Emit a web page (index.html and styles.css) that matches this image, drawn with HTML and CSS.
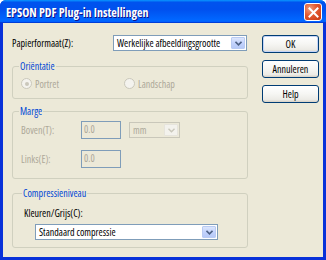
FILE: index.html
```html
<!DOCTYPE html>
<html>
<head>
<meta charset="utf-8">
<link rel="stylesheet" href="styles.css">
</head>
<body>
<div class="window">
  <div class="titlebar">
    <span class="title">EPSON PDF Plug-in Instellingen</span>
    <span class="close"><svg width="11" height="11" viewBox="0 0 11 11"><path d="M1.5 1.5 L9.5 9.5 M9.5 1.5 L1.5 9.5" stroke="#fff" stroke-width="2" stroke-linecap="square"/></svg></span>
  </div>
  <div class="body">
    <div class="main">
      <div class="row paper">
        <span class="lbl">Papierformaat(Z):</span>
        <div class="combo wide">
          <span class="val">Werkelijke afbeeldingsgrootte</span>
          <span class="drop"><svg width="7" height="5" viewBox="0 0 7 5"><path d="M0.5 0.8 L3.5 3.8 L6.5 0.8" fill="none" stroke="#4d6185" stroke-width="1.6"/></svg></span>
        </div>
      </div>
      <fieldset class="group orient">
        <legend>Oriëntatie</legend>
        <div class="radios">
          <span class="radio first"><span class="dot on"></span><span class="dis">Portret</span></span>
          <span class="radio"><span class="dot"></span><span class="dis">Landschap</span></span>
        </div>
      </fieldset>
      <fieldset class="group marge">
        <legend>Marge</legend>
        <div class="mrow">
          <span class="mlbl dis">Boven(T):</span>
          <span class="edit">0.0</span>
          <div class="combo unit">
            <span class="val dis">mm</span>
            <span class="drop grey"><svg width="7" height="5" viewBox="0 0 7 5"><path d="M0.5 0.8 L3.5 3.8 L6.5 0.8" fill="none" stroke="#c9c7ba" stroke-width="1.4"/></svg></span>
          </div>
        </div>
        <div class="mrow second">
          <span class="mlbl dis">Links(E):</span>
          <span class="edit">0.0</span>
        </div>
      </fieldset>
      <fieldset class="group comp">
        <legend>Compressieniveau</legend>
        <div class="clbl">Kleuren/Grijs(C):</div>
        <div class="combo std">
          <span class="val">Standaard compressie</span>
          <span class="drop"><svg width="7" height="5" viewBox="0 0 7 5"><path d="M0.5 0.8 L3.5 3.8 L6.5 0.8" fill="none" stroke="#4d6185" stroke-width="1.6"/></svg></span>
        </div>
      </fieldset>
    </div>
    <div class="buttons">
      <button class="btn def">OK</button>
      <button class="btn">Annuleren</button>
      <button class="btn">Help</button>
    </div>
  </div>
</div>
</body>
</html>
```
FILE: styles.css
```css
* { box-sizing: border-box; }
html, body { margin: 0; padding: 0; }
body {
  width: 326px; height: 260px; overflow: hidden;
  font-family: "Open Sans", "Liberation Sans", Arial, sans-serif;
  font-stretch: 75%;
  font-size: 10px; color: #000;
}
.window {
  width: 326px; height: 260px;
  display: flex; flex-direction: column;
  background: #0831d9;
  border-radius: 6px 6px 0 0;
}
.titlebar {
  height: 23px; flex: none;
  display: flex; align-items: center; justify-content: space-between;
  padding: 0 4px 0 6px;
  background: linear-gradient(180deg, #0997ff 0%, #0053ee 10%, #0050ee 40%, #0066ff 85%, #0066ff 92%, #005bff 95%, #003dd7 97%, #003dd7 100%);
  border-radius: 6px 6px 0 0;
}
.title {
  color: #fff; font-weight: bold; font-size: 12px;
  text-shadow: 1px 1px #0f1089;
  padding-top: 1px;
}
.close {
  width: 18px; height: 18px; margin-top: 1px;
  display: flex; align-items: center; justify-content: center;
  border: 1px solid #fff; border-radius: 3px;
  background: radial-gradient(circle at 30% 30%, #f0a080 0%, #e35c34 40%, #c8360e 100%);
}
.body {
  flex: 1;
  margin: 0 3px 3px 3px;
  background: #ece9d8;
  display: flex;
  padding: 12px 0 0 9px;
}
.main { width: 236px; display: flex; flex-direction: column; }
.row.paper { display: flex; align-items: center; height: 16px; }
.lbl { width: 101px; }
.combo {
  display: flex; align-items: center; justify-content: space-between;
  height: 16px; border: 1px solid #7f9db9; background: #fff;
  padding: 0 1px 0 3px;
}
.combo.wide { width: 134px; }
.val { white-space: nowrap; }
.drop {
  width: 14px; height: 12px;
  display: flex; align-items: center; justify-content: center;
  background: linear-gradient(180deg, #dce6fc 0%, #c3d3fd 50%, #b6c9f7 100%);
  border: 1px solid #b9cbf3; border-radius: 1px;
}
.drop.grey { background: #f3f2ed; border-color: #e6e4dc; }
.group {
  margin: 0; padding: 0 8px 0 8px;
  border: 1px solid #d0d0bf; border-radius: 3px;
}
.group legend {
  color: #0046d5; padding: 0 1px; margin-left: -2px;
  line-height: 12px;
}
.orient { margin-top: 9px; height: 39px; }
.radios { display: flex; height: 22px; align-items: center; padding-top: 1px; }
.radio { display: flex; align-items: center; gap: 3px; }
.radio.first { width: 103px; }
.dot {
  width: 11px; height: 11px; border-radius: 50%;
  border: 1px solid #cac8bb; background: #f4f3ee;
  display: flex; align-items: center; justify-content: center;
}
.dot.on::after { content: ""; width: 4px; height: 4px; border-radius: 50%; background: #cac8bb; }
.dis { color: #aca899; }
.marge { margin-top: 6px; height: 74px; padding-left: 8px; }
.mrow { display: flex; align-items: center; height: 18px; margin-top: 4px; }
.mrow.second { margin-top: 11px; }
.mlbl { width: 60px; }
.edit {
  width: 40px; height: 18px; border: 1px solid #7f9db9;
  color: #aca899; padding: 1px 0 0 2px; line-height: 12px;
}
.combo.unit { width: 51px; margin-left: 8px; height: 16px; background: #ece9d8; border-color: #c9c7ba; }
.comp { margin-top: 8px; height: 61px; padding-left: 11px; }
.clbl { margin-top: 8px; height: 12px; line-height: 12px; }
.combo.std { width: 183px; margin-top: 5px; margin-left: 11px; }
.buttons {
  margin-left: 14px; width: 57px;
  display: flex; flex-direction: column; gap: 7px;
}
.btn {
  width: 57px; height: 18px; margin: 0; padding: 0;
  font-family: inherit; font-stretch: inherit; font-size: 10px; color: #000;
  border: 1px solid #003c74; border-radius: 3px;
  background: linear-gradient(180deg, #ffffff 0%, #f6f6f3 50%, #ecebe6 85%, #d6d0c5 100%);
}
.btn.def { box-shadow: inset 0 0 0 1px #c4d4f7; }
```
